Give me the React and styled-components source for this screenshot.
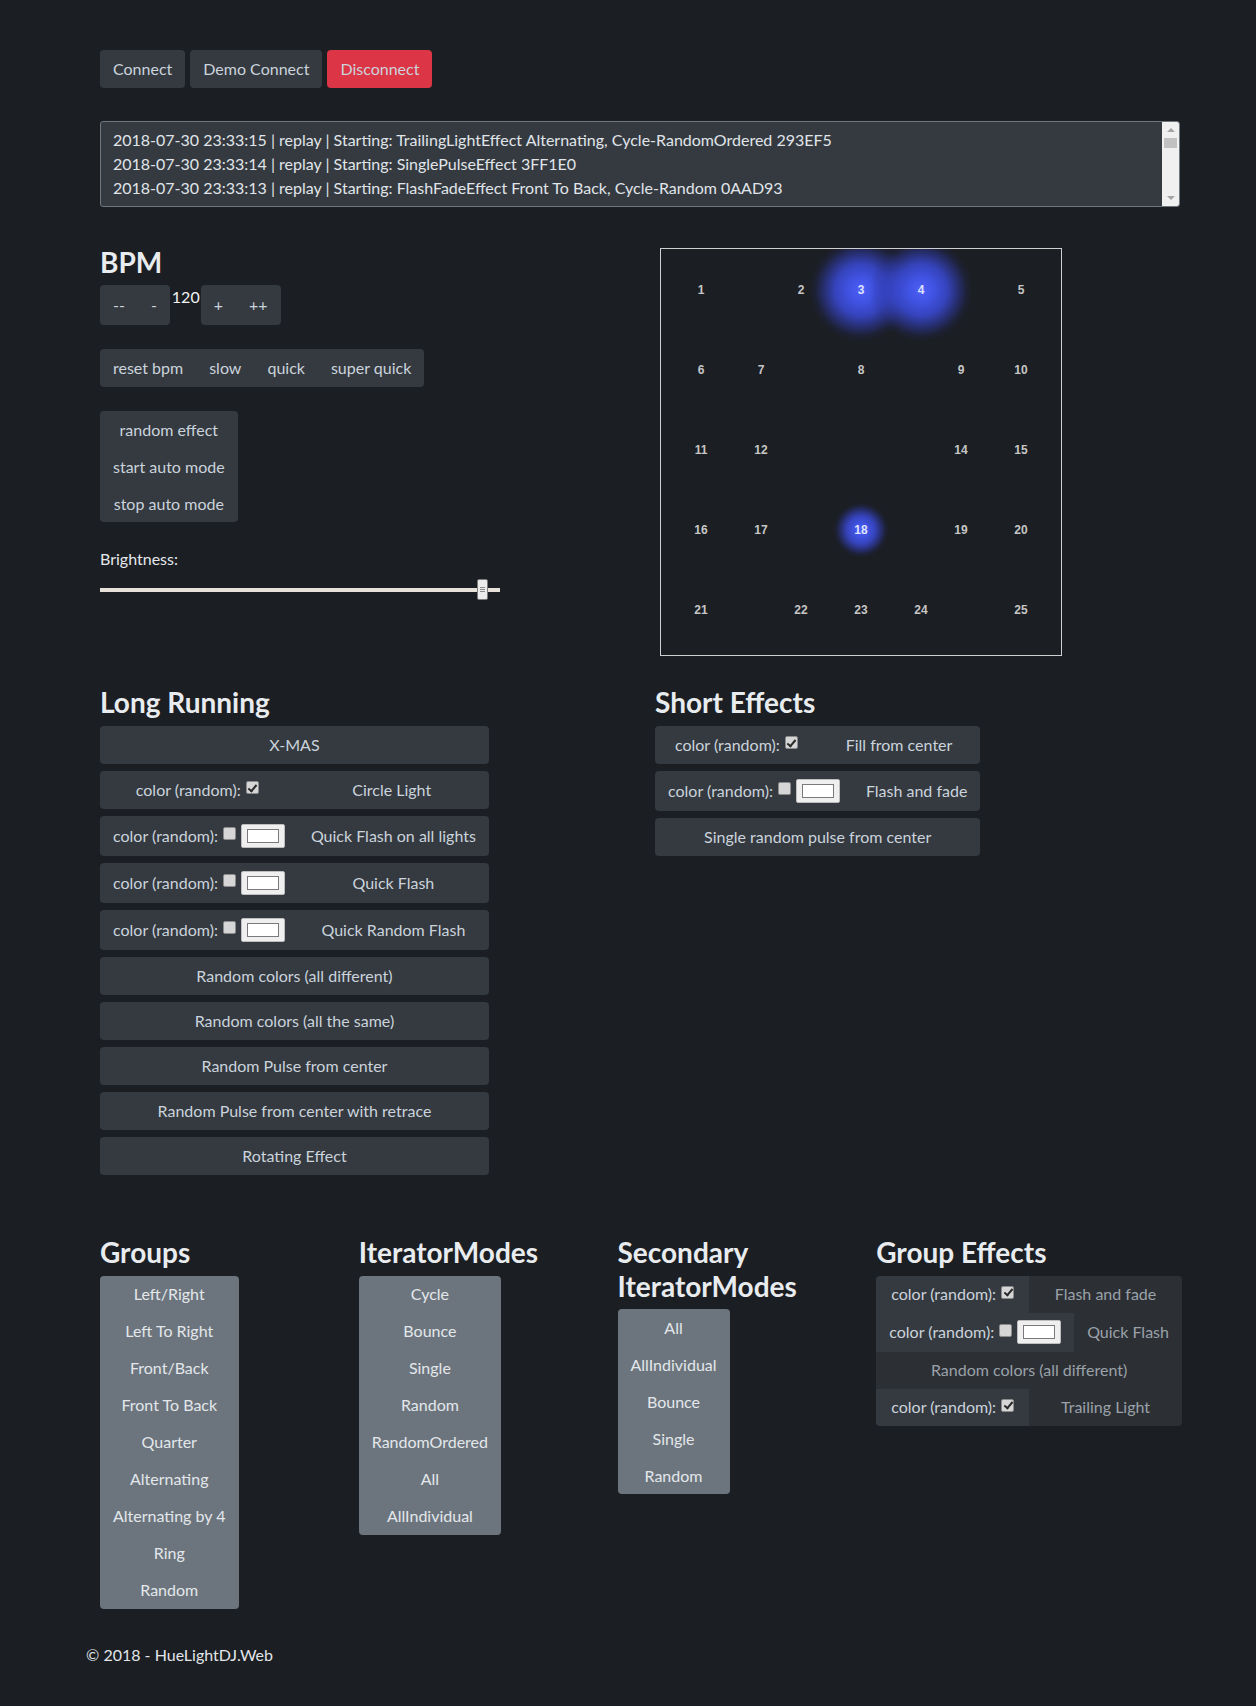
import React from "react";
import styled, { createGlobalStyle } from "styled-components";

const GlobalStyle = createGlobalStyle`
  html, body {
    margin: 0;
    padding: 0;
    background: #1b1e22;
  }
  body {
    font-family: Lato, "Open Sans", "Liberation Sans", sans-serif;
    font-size: 16px;
    line-height: 1.5;
    color: #e2e6ea;
  }
  * { box-sizing: border-box; }
`;

const Page = styled.div`
  min-height: 1706px;
  padding-top: 50px;
`;

const Container = styled.div`
  width: 1110px;
  margin-left: 85px;
`;

const Padded = styled.div`
  padding: 0 15px;
`;

const TopBar = styled.div`
  display: flex;
  gap: 5px;
`;

const Btn = styled.button`
  font: inherit;
  line-height: 24px;
  border: none;
  border-radius: 4px;
  padding: 7px 13px;
  color: #cbd3dc;
  background: ${({ danger }) => (danger ? "#dc3545" : "#343a40")};
  white-space: nowrap;
  cursor: pointer;
`;

const LogBox = styled.div`
  margin-top: 33px;
  height: 86px;
  display: flex;
  background: #343a40;
  border: 1px solid #70767d;
  border-radius: 3px;
  overflow: hidden;
`;

const LogText = styled.div`
  flex: 1;
  padding: 6px 12px;
  color: #e0e5ea;
  white-space: nowrap;
  overflow: hidden;
`;

const ScrollRail = styled.div`
  width: 17px;
  background: #f0f0f0;
  display: flex;
  flex-direction: column;
  align-items: center;
`;

const Arrow = styled.div`
  width: 17px;
  height: 16px;
  display: flex;
  align-items: center;
  justify-content: center;
  &::before {
    content: "";
    border-left: 4px solid transparent;
    border-right: 4px solid transparent;
    ${({ down }) => (down ? "border-top: 4px solid #a3a3a3;" : "border-bottom: 4px solid #a3a3a3;")}
  }
`;

const Thumb = styled.div`
  width: 13px;
  height: 10px;
  background: #c1c1c1;
`;

const RailFill = styled.div`
  flex: 1;
`;

const Row = styled.div`
  display: grid;
  grid-template-columns: 555px 555px;
  align-items: start;
  margin-top: ${({ top }) => top}px;
`;

const Col = styled.div`
  padding: 0 15px;
`;

const Heading = styled.h3`
  margin: 0 0 6px;
  font-size: 28px;
  font-weight: 700;
  line-height: 1.2;
  color: #e9ecef;
`;

const BpmRow = styled.div`
  display: flex;
  align-items: flex-start;
`;

const Group = styled.div`
  display: inline-flex;
  flex-direction: ${({ vertical }) => (vertical ? "column" : "row")};
  background: #343a40;
  border-radius: 4px;
`;

const GroupBtn = styled.button`
  font: inherit;
  line-height: 24px;
  border: none;
  background: transparent;
  color: #cbd3dc;
  padding: ${({ tall }) => (tall ? "8px 13px" : "7px 13px")};
  white-space: nowrap;
  text-align: center;
  cursor: pointer;
`;

const StackBtn = styled(GroupBtn)`
  padding: 6.5px 13px;
`;

const BpmValue = styled.span`
  padding: 0 1px 0 2px;
  line-height: 24px;
  color: #f1f3f5;
`;

const Block = styled.div`
  margin-top: ${({ top }) => top}px;
`;

const Label = styled.div`
  color: #e4e8ec;
`;

const Slider = styled.input`
  -webkit-appearance: none;
  appearance: none;
  display: block;
  width: 400px;
  height: 21px;
  margin: 8px 0 0;
  background: transparent;
  &::-webkit-slider-runnable-track {
    height: 4px;
    background: #e6e1d9;
  }
  &::-webkit-slider-thumb {
    -webkit-appearance: none;
    width: 11px;
    height: 21px;
    margin-top: -8.5px;
    border: 1px solid #7c7c7c;
    border-radius: 2px;
    background:
      linear-gradient(#8a8a8a, #8a8a8a) center 7px / 5px 1px no-repeat,
      linear-gradient(#8a8a8a, #8a8a8a) center 9px / 5px 1px no-repeat,
      linear-gradient(#8a8a8a, #8a8a8a) center 11px / 5px 1px no-repeat,
      #ececec;
  }
`;

const LightBox = styled.div`
  position: relative;
  width: 402px;
  height: 408px;
  margin: 2.5px 0 0 5px;
  border: 1px solid #cfcfcf;
  overflow: hidden;
`;

const Light = styled.div`
  position: absolute;
  transform: translate(-50%, -50%);
  width: ${({ glow }) => glow || 30}px;
  height: ${({ glow }) => glow || 30}px;
  border-radius: 50%;
  display: flex;
  align-items: center;
  justify-content: center;
  font-family: "Liberation Sans", Arial, sans-serif;
  font-weight: 700;
  font-size: 12px;
  color: ${({ glow }) => (glow ? "#dfe3ff" : "#c6c6c6")};
  background: ${({ glow }) =>
    glow
      ? "radial-gradient(circle closest-side, #4e60f6 0%, #4052e2 25%, rgba(58,74,214,0.85) 50%, rgba(50,62,185,0.5) 72%, rgba(40,48,140,0.18) 88%, rgba(27,30,34,0) 100%)"
      : "none"};
`;

const EffectList = styled.div`
  display: inline-flex;
  flex-direction: column;
  gap: ${({ joined }) => (joined ? 0 : 7)}px;
`;

const EffectRow = styled.div`
  display: flex;
  border-radius: ${({ joined }) => (joined ? 0 : 4)}px;
  overflow: hidden;
  &:first-child { border-top-left-radius: 4px; border-top-right-radius: 4px; }
  &:last-child { border-bottom-left-radius: 4px; border-bottom-right-radius: 4px; }
`;

const EffectPart = styled.div`
  flex: 1 1 50%;
  display: flex;
  align-items: center;
  justify-content: center;
  padding: ${({ joined }) => (joined ? "6.5px 13px" : "7px 13px")};
  white-space: nowrap;
  background: ${({ dim }) => (dim ? "#2c3035" : "#343a40")};
  color: ${({ dim }) => (dim ? "#9aa1a9" : "#cbd3dc")};
  cursor: pointer;
`;

const Check = styled.input`
  -webkit-appearance: none;
  appearance: none;
  position: relative;
  top: -2px;
  flex: none;
  width: 13px;
  height: 13px;
  margin: 0 0 0 5px;
  background: #d6d6d6;
  border: 1px solid #8c8c8c;
  border-radius: 2px;
  &:checked::after {
    content: "";
    position: absolute;
    left: 3.5px;
    top: 0.5px;
    width: 3px;
    height: 7px;
    border: solid #2a2a2a;
    border-width: 0 2px 2px 0;
    transform: rotate(40deg);
  }
`;

const Swatch = styled.input`
  -webkit-appearance: none;
  appearance: none;
  flex: none;
  width: 44px;
  height: 24px;
  margin: 1px 0 1px 5px;
  padding: 4px 5px;
  background: #efefef;
  border: 1px solid #bdbdbd;
  border-radius: 2px;
  &::-webkit-color-swatch-wrapper { padding: 0; }
  &::-webkit-color-swatch { border: 1px solid #7a7a7a; border-radius: 0; }
`;

const BottomGrid = styled.div`
  display: grid;
  grid-template-columns: repeat(4, 258.75px);
  align-items: start;
  margin: 61.5px 0 0 15px;
`;

const ModeList = styled.div`
  display: inline-flex;
  flex-direction: column;
  background: #6c757d;
  border-radius: 4px;
`;

const ModeBtn = styled.button`
  font: inherit;
  line-height: 24px;
  border: none;
  background: transparent;
  color: #e3e7eb;
  padding: 6.5px 13px;
  white-space: nowrap;
  cursor: pointer;
`;

const Footer = styled.footer`
  margin-top: 34px;
  padding-left: 86px;
  color: #e2e6ea;
`;

const logLines = [
  "2018-07-30 23:33:15 | replay | Starting: TrailingLightEffect Alternating, Cycle-RandomOrdered 293EF5",
  "2018-07-30 23:33:14 | replay | Starting: SinglePulseEffect 3FF1E0",
  "2018-07-30 23:33:13 | replay | Starting: FlashFadeEffect Front To Back, Cycle-Random 0AAD93",
];

const lights = [
  [1, 40, 41], [2, 140, 41], [3, 200, 41, 104], [4, 260, 41, 104], [5, 360, 41],
  [6, 40, 121], [7, 100, 121], [8, 200, 121], [9, 300, 121], [10, 360, 121],
  [11, 40, 201], [12, 100, 201], [14, 300, 201], [15, 360, 201],
  [16, 40, 281], [17, 100, 281], [18, 200, 281, 56], [19, 300, 281], [20, 360, 281],
  [21, 40, 361], [22, 140, 361], [23, 200, 361], [24, 260, 361], [25, 360, 361],
];

// kind: plain | check (random on) | color (random off + picker)
const longRunning = [
  ["plain", "X-MAS"],
  ["check", "Circle Light"],
  ["color", "Quick Flash on all lights"],
  ["color", "Quick Flash"],
  ["color", "Quick Random Flash"],
  ["plain", "Random colors (all different)"],
  ["plain", "Random colors (all the same)"],
  ["plain", "Random Pulse from center"],
  ["plain", "Random Pulse from center with retrace"],
  ["plain", "Rotating Effect"],
];

const shortEffects = [
  ["check", "Fill from center"],
  ["color", "Flash and fade"],
  ["plain", "Single random pulse from center"],
];

const groupEffects = [
  ["check", "Flash and fade"],
  ["color", "Quick Flash"],
  ["plain", "Random colors (all different)"],
  ["check", "Trailing Light"],
];

const groups = ["Left/Right", "Left To Right", "Front/Back", "Front To Back", "Quarter", "Alternating", "Alternating by 4", "Ring", "Random"];
const iteratorModes = ["Cycle", "Bounce", "Single", "Random", "RandomOrdered", "All", "AllIndividual"];
const secondaryModes = ["All", "AllIndividual", "Bounce", "Single", "Random"];

const Effects = ({ items, joined }) => (
  <EffectList joined={joined}>
    {items.map(([kind, name]) => (
      <EffectRow key={name} joined={joined}>
        {kind === "plain" ? (
          <EffectPart joined={joined} dim={joined}>{name}</EffectPart>
        ) : (
          <>
            <EffectPart joined={joined}>
              color (random):
              <Check type="checkbox" checked={kind === "check"} readOnly />
              {kind === "color" && <Swatch type="color" defaultValue="#ffffff" />}
            </EffectPart>
            <EffectPart joined={joined} dim={joined}>{name}</EffectPart>
          </>
        )}
      </EffectRow>
    ))}
  </EffectList>
);

const Modes = ({ items }) => (
  <ModeList>
    {items.map((m) => (
      <ModeBtn key={m}>{m}</ModeBtn>
    ))}
  </ModeList>
);

const App = () => {
  return (
    <Page>
      <GlobalStyle />
      <Container>
        <Padded>
          <TopBar>
            <Btn>Connect</Btn>
            <Btn>Demo Connect</Btn>
            <Btn danger>Disconnect</Btn>
          </TopBar>
          <LogBox>
            <LogText>
              {logLines.map((l) => (
                <div key={l}>{l}</div>
              ))}
            </LogText>
            <ScrollRail>
              <Arrow />
              <Thumb />
              <RailFill />
              <Arrow down />
            </ScrollRail>
          </LogBox>
        </Padded>

        <Row top={38.5}>
          <Col>
            <Heading>BPM</Heading>
            <BpmRow>
              <Group>
                <GroupBtn tall>--</GroupBtn>
                <GroupBtn tall>-</GroupBtn>
              </Group>
              <BpmValue>120</BpmValue>
              <Group>
                <GroupBtn tall>+</GroupBtn>
                <GroupBtn tall>++</GroupBtn>
              </Group>
            </BpmRow>
            <Block top={24}>
              <Group>
                <GroupBtn>reset bpm</GroupBtn>
                <GroupBtn>slow</GroupBtn>
                <GroupBtn>quick</GroupBtn>
                <GroupBtn>super quick</GroupBtn>
              </Group>
            </Block>
            <Block top={24}>
              <Group vertical>
                <StackBtn>random effect</StackBtn>
                <StackBtn>start auto mode</StackBtn>
                <StackBtn>stop auto mode</StackBtn>
              </Group>
            </Block>
            <Block top={25}>
              <Label>Brightness:</Label>
              <Slider type="range" min="0" max="100" defaultValue="97" />
            </Block>
          </Col>
          <Col>
            <LightBox>
              {lights.map(([n, x, y, glow]) => (
                <Light key={n} glow={glow} style={{ left: x, top: y }}>
                  {n}
                </Light>
              ))}
            </LightBox>
          </Col>
        </Row>

        <Row top={30}>
          <Col>
            <Heading>Long Running</Heading>
            <Effects items={longRunning} />
          </Col>
          <Col>
            <Heading>Short Effects</Heading>
            <Effects items={shortEffects} />
          </Col>
        </Row>

        <BottomGrid>
          <div>
            <Heading>Groups</Heading>
            <Modes items={groups} />
          </div>
          <div>
            <Heading>IteratorModes</Heading>
            <Modes items={iteratorModes} />
          </div>
          <div>
            <Heading>Secondary IteratorModes</Heading>
            <Modes items={secondaryModes} />
          </div>
          <div>
            <Heading>Group Effects</Heading>
            <Effects items={groupEffects} joined />
          </div>
        </BottomGrid>
      </Container>
      <Footer>© 2018 - HueLightDJ.Web</Footer>
    </Page>
  );
};

export default App;
